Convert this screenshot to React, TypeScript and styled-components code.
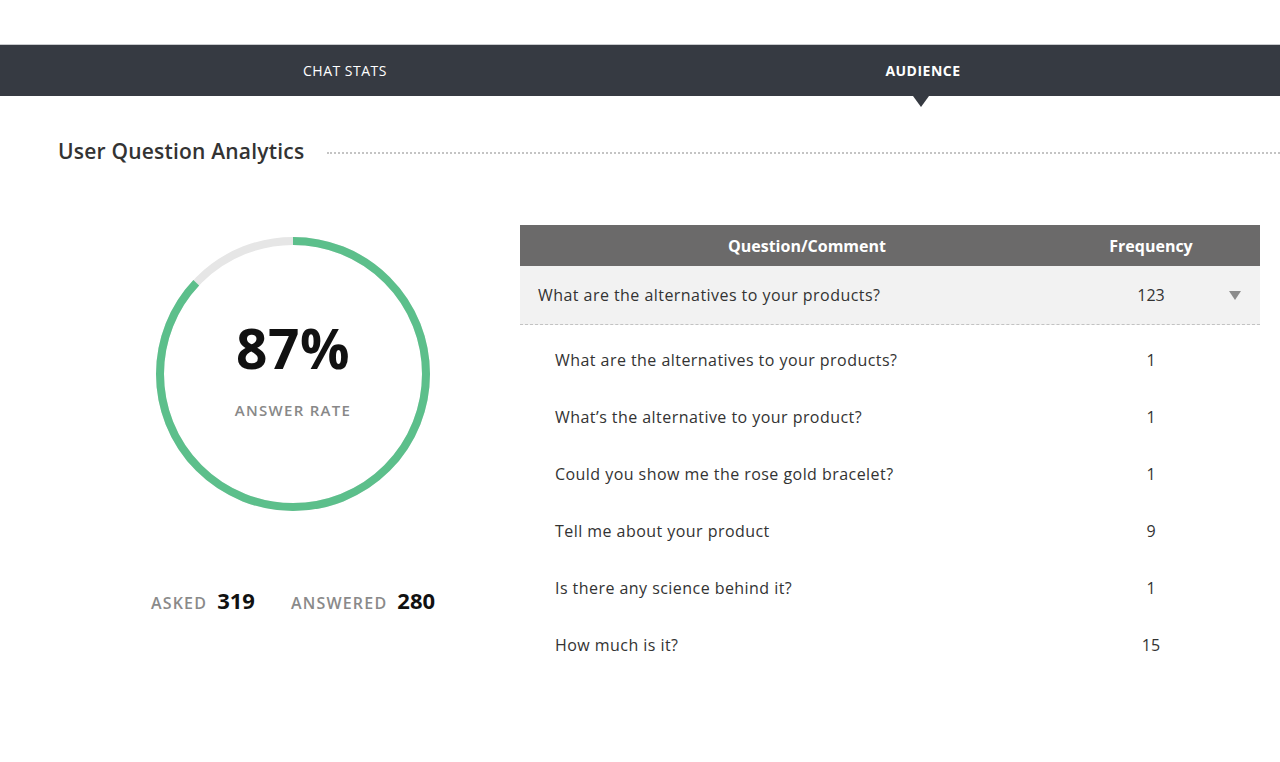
import React from 'react'
import styled, { createGlobalStyle } from 'styled-components'

const GlobalStyle = createGlobalStyle`
  body {
    margin: 0;
    background: #ffffff;
    font-family: "Open Sans", Lato, sans-serif;
    color: #333333;
  }
`

const questions = [
  { text: 'What are the alternatives to your products?', count: 1 },
  { text: 'What’s the alternative to your product?', count: 1 },
  { text: 'Could you show me the rose gold bracelet?', count: 1 },
  { text: 'Tell me about your product', count: 9 },
  { text: 'Is there any science behind it?', count: 1 },
  { text: 'How much is it?', count: 15 },
]

const asked = 319
const answered = 280
const rate = Math.floor((answered / asked) * 100)

function RateRing({ value }: { value: number }) {
  const r = 133
  const c = 2 * Math.PI * r
  return (
    <svg width="282" height="282" viewBox="0 0 282 282">
      <circle cx="141" cy="141" r={r} fill="none" stroke="#e6e6e6" strokeWidth="8" />
      <circle
        cx="141"
        cy="141"
        r={r}
        fill="none"
        stroke="#5cbf8b"
        strokeWidth="8"
        strokeDasharray={`${(c * value) / 100} ${c}`}
        transform="rotate(-90 141 141)"
      />
    </svg>
  )
}

function App() {
  return (
    <>
      <GlobalStyle />
      <Page>
        <TabBar>
          <Tab>Chat Stats</Tab>
          <Tab active>Audience</Tab>
        </TabBar>

        <TitleRow>
          <Title>User Question Analytics</Title>
          <TitleRule />
        </TitleRow>

        <Content>
          <RatePanel>
            <RingWrap>
              <RateRing value={rate} />
              <RingLabel>
                <RateValue>{rate}%</RateValue>
                <RateCaption>Answer Rate</RateCaption>
              </RingLabel>
            </RingWrap>
            <Totals>
              <Total>
                <TotalLabel>Asked</TotalLabel>
                <TotalValue>{asked}</TotalValue>
              </Total>
              <Total>
                <TotalLabel>Answered</TotalLabel>
                <TotalValue>{answered}</TotalValue>
              </Total>
            </Totals>
          </RatePanel>

          <Table>
            <HeadRow>
              <HeadCell>Question/Comment</HeadCell>
              <HeadCell>Frequency</HeadCell>
              <span />
            </HeadRow>
            <GroupRow>
              <GroupText>What are the alternatives to your products?</GroupText>
              <Count>123</Count>
              <Caret />
            </GroupRow>
            <SubList>
              {questions.map((q) => (
                <SubRow key={q.text}>
                  <SubText>{q.text}</SubText>
                  <Count>{q.count}</Count>
                  <span />
                </SubRow>
              ))}
            </SubList>
          </Table>
        </Content>
      </Page>
    </>
  )
}

const Page = styled.div`
  width: 1280px;
  height: 762px;
  padding-top: 44px;
  box-sizing: border-box;
  overflow: hidden;
`

const TabBar = styled.div`
  display: flex;
  height: 52px;
  padding-left: 56px;
  background: #363a42;
  border-top: 1px solid #c9cbce;
  box-sizing: border-box;
`

const Tab = styled.div<{ active?: boolean }>`
  position: relative;
  width: 578px;
  display: flex;
  align-items: center;
  justify-content: center;
  font-size: 14px;
  letter-spacing: 0.5px;
  text-transform: uppercase;
  color: #ffffff;
  font-weight: ${(p) => (p.active ? 700 : 400)};

  &::after {
    content: '';
    display: ${(p) => (p.active ? 'block' : 'none')};
    position: absolute;
    left: 50%;
    bottom: -11px;
    margin-left: -10px;
    border-left: 8px solid transparent;
    border-right: 8px solid transparent;
    border-top: 11px solid #363a42;
  }
`

const TitleRow = styled.div`
  display: flex;
  align-items: center;
  gap: 23px;
  padding: 41px 0 0 58px;
`

const Title = styled.h2`
  margin: 0;
  font-size: 21px;
  font-weight: 600;
  letter-spacing: 0.2px;
  color: #333333;
`

const TitleRule = styled.div`
  flex: 1;
  margin-top: 3px;
  border-top: 2px dotted #c4c4c4;
`

const Content = styled.div`
  display: flex;
  padding-top: 60px;
`

const RatePanel = styled.div`
  width: 520px;
  display: flex;
  flex-direction: column;
  align-items: center;
  padding: 8px 0 0 66px;
  box-sizing: border-box;
`

const RingWrap = styled.div`
  position: relative;
  width: 282px;
  height: 282px;
`

const RingLabel = styled.div`
  position: absolute;
  inset: 0;
  display: flex;
  flex-direction: column;
  align-items: center;
  padding-top: 87px;
  box-sizing: border-box;
`

const RateValue = styled.div`
  font-size: 55px;
  font-weight: 700;
  color: #111111;
  line-height: 1;
  letter-spacing: 0.5px;
`

const RateCaption = styled.div`
  margin-top: 25px;
  font-size: 15px;
  font-weight: 600;
  color: #888888;
  text-transform: uppercase;
  letter-spacing: 1.3px;
`

const Totals = styled.div`
  display: flex;
  gap: 36px;
  margin-top: 70px;
`

const Total = styled.div`
  display: flex;
  align-items: baseline;
  gap: 10px;
`

const TotalLabel = styled.span`
  font-size: 16px;
  font-weight: 600;
  letter-spacing: 1.2px;
  color: #8a8a8a;
  text-transform: uppercase;
`

const TotalValue = styled.span`
  font-size: 22px;
  font-weight: 700;
  color: #111111;
`

const Table = styled.div`
  width: 740px;
  display: flex;
  flex-direction: column;
`

const rowGrid = `
  display: grid;
  grid-template-columns: 574px 114px 52px;
  align-items: center;
`

const HeadRow = styled.div`
  ${rowGrid}
  height: 41px;
  background: #6b6a6a;
`

const HeadCell = styled.div`
  text-align: center;
  font-size: 16px;
  font-weight: 700;
  color: #ffffff;
`

const GroupRow = styled.div`
  ${rowGrid}
  height: 59px;
  background: #f2f2f2;
  border-bottom: 1px dashed #c2c2c2;
  box-sizing: border-box;
`

const GroupText = styled.div`
  padding-left: 18px;
  font-size: 16px;
  letter-spacing: 0.45px;
  color: #333333;
`

const SubList = styled.div`
  display: flex;
  flex-direction: column;
  padding-top: 6px;
`

const SubRow = styled.div`
  ${rowGrid}
  height: 57px;
`

const SubText = styled.div`
  padding-left: 35px;
  font-size: 16px;
  letter-spacing: 0.45px;
  color: #333333;
`

const Count = styled.div`
  text-align: center;
  font-size: 16px;
  color: #333333;
`

const Caret = styled.div`
  justify-self: center;
  margin-left: 2px;
  width: 0;
  height: 0;
  border-left: 6px solid transparent;
  border-right: 6px solid transparent;
  border-top: 9px solid #8c8c8c;
`

export default App
